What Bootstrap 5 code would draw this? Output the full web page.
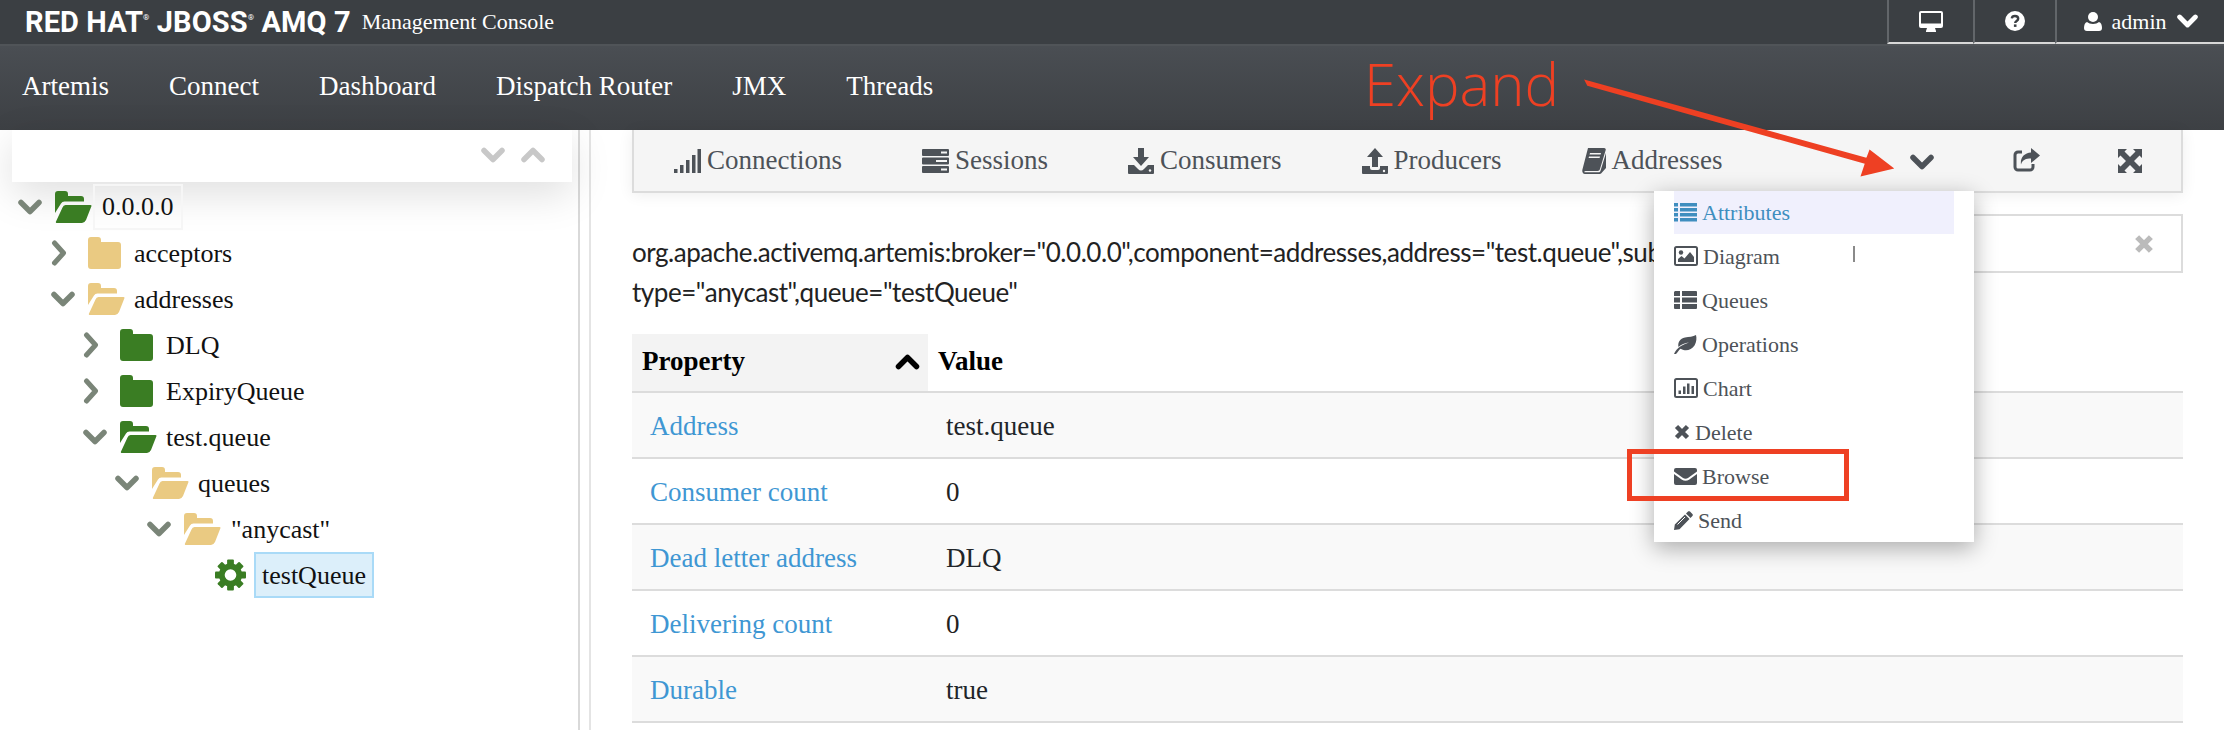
<!DOCTYPE html>
<html lang="en">
<head>
  <meta charset="UTF-8" />
  <meta name="viewport" content="width=device-width, initial-scale=1.0" />
  <title>Red Hat JBoss AMQ 7 Management Console</title>
  <link rel="stylesheet" href="https://cdn.jsdelivr.net/npm/bootstrap@5.3.0/dist/css/bootstrap.min.css">
  <style>
    html, body { height: 730px; overflow: hidden; }
    body { background: #fff; color: #222; font-family: "Liberation Serif", serif; font-size: 27px; }
    svg { display: block; flex: none; }
    .shot-page { position: relative; width: 2228px; height: 730px; padding-right: 4px; overflow: hidden; }

    /* top bars */
    .util-bar { height: 46px; background: #3b3f43; border-bottom: 2px solid #505458; }
    .brand-mark { font-family: "Roboto", "Liberation Sans", sans-serif; font-weight: 700; font-size: 29px; color: #fff; margin-left: 25px; line-height: 44px; white-space: nowrap; letter-spacing: .1px; }
    .brand-mark sup { font-size: 8px; top: -1.5em; font-weight: 400; }
    .brand-sub { font-size: 22px; color: #fff; margin-left: 11px; line-height: 44px; }
    .util-cell { height: 44px; border-left: 2px solid #62666a; border-bottom: 2px solid #d8d8d8; display: flex; align-items: center; justify-content: center; color: #fff; font-size: 22px; }
    .util-display { width: 86px; }
    .util-help { width: 82px; }
    .util-user { width: 169px; gap: 10px; }
    .main-nav { height: 84px; background: linear-gradient(#4a4e53, #3d4044); position: relative; }
    .main-nav .nav-link { color: #fff; font-size: 27px; padding: 0 30px; line-height: 81px; }
    .main-nav .nav-link:first-child { padding-left: 22px; }
    .expand-label { position: absolute; left: 1364px; top: -1px; font-family: "Open Sans", sans-serif; font-weight: 300; font-size: 58px; line-height: 78px; color: #ee4023; }

    /* tree pane */
    .tree-pane { width: 578px; height: 600px; flex: none; position: relative; }
    .tree-search { height: 52px; margin: 0 6px 0 12px; background: #fff; box-shadow: 0 12px 40px rgba(0, 0, 0, .13); padding: 17px 27px 0 0; color: #c8c8c8; position: relative; z-index: 1; }
    .tree-list { list-style: none; margin: 2px 0 0; padding: 0; font-size: 26px; color: #111; position: relative; z-index: 2; }
    .tree-row { height: 46px; display: flex; align-items: center; }
    .tree-toggle { width: 37px; flex: none; color: #7a8578; }
    .tree-folder { width: 39px; flex: none; }
    .tree-text { padding: 2px 7px 0; line-height: 40px; border: 2px solid transparent; }
    .is-root .tree-text { border-color: #f6f6f6; margin-left: -1px; padding-top: 0; line-height: 42px; }
    .is-selected .tree-text { background: #dceffa; border-color: #a9daf7; margin-left: 8px; padding-right: 6px; }
    .lvl-0 { padding-left: 18px; }
    .lvl-1 { padding-left: 51px; }
    .lvl-2 { padding-left: 83px; }
    .lvl-3 { padding-left: 115px; }
    .lvl-4 { padding-left: 147px; }
    .lvl-5 { padding-left: 215px; }
    .lvl-1 .tree-text, .lvl-2 .tree-text, .lvl-3 .tree-text { padding-left: 5px; }
    .lvl-4 .tree-text { padding-left: 6px; }
    .lvl-5 .tree-text { padding-left: 6px; }
    .c-green { color: #3a7d23; }
    .c-tan { color: #eaca82; }
    .pane-gutter { width: 13px; flex: none; height: 600px; border-left: 2px solid #d9d9d9; border-right: 2px solid #e4e4e4; }

    /* main pane */
    .main-pane { flex: 1; padding: 0 41px; min-width: 0; }
    .tool-bar { height: 63px; background: #f5f5f5; border: 2px solid #dcdcdc; border-top: 0; box-shadow: 0 2px 14px rgba(0, 0, 0, .07); padding-left: 40px; color: #4d5258; position: relative; }
    .tool-item { display: flex; align-items: center; gap: 6px; margin-right: 80px; line-height: 61px; color: #4d5258; text-decoration: none; }
    .tool-right { position: absolute; top: 0; left: 0; height: 61px; }
    .tool-right svg { position: absolute; }
    .title-row { margin-top: 21px; height: 120px; }
    .mbean-title { width: 1318px; padding-top: 18px; font-family: "Lato", sans-serif; font-size: 26px; line-height: 40px; color: #222; letter-spacing: -.45px; flex: none; }
    .filter-box { flex: 1; height: 59px; border: 2px solid #dcdcdc; color: #bbb; display: flex; align-items: center; justify-content: flex-end; padding-right: 27px; }
    .attr-table { margin: 0; --bs-table-striped-bg: #f9f9f9; --bs-table-border-color: #dcdcdc; }
    .attr-table th, .attr-table td { border-bottom-width: 2px; font-size: 27px; color: #222; vertical-align: middle; padding: 3px 0 0 18px; height: 66px; line-height: 1; }
    .attr-table th { height: 58px; color: #000; padding: 0 0 2px 10px; background: #fff; }
    .attr-table th.sorted-col { background: #f3f3f3; width: 296px; }
    .attr-table a { color: #3f97d3; text-decoration: none; }

    /* menu hanging off the toolbar */
    .more-menu.dropdown-menu { display: block; left: 1020px; top: 61px; width: 320px; height: 351px; margin: 0; padding: 0 20px; border: 0; border-radius: 0; box-shadow: 0 6px 22px rgba(0, 0, 0, .32); z-index: 5; }
    .more-menu .dropdown-item { display: flex; align-items: center; gap: 5px; height: 44px; padding: 0; font-size: 22px; color: #4d5258; }
    .more-menu .dropdown-item.is-current { background: #f0f0fd; color: #3f8ebf; height: 43px; }
    .stray-caret { position: absolute; left: 199px; top: 55px; width: 2px; height: 16px; background: #8a8a8a; }
    .note-layer { position: absolute; left: 0; top: 0; z-index: 10; pointer-events: none; }
  </style>
</head>
<body>
  <svg width="0" height="0" class="position-absolute">
    <defs>
      <symbol id="i-down" viewBox="0 0 24 16"><path d="M3 3.5 12 12.5 21 3.5" fill="none" stroke="currentColor" stroke-width="5.5" stroke-linejoin="round" stroke-linecap="round"/></symbol>
      <symbol id="i-up" viewBox="0 0 24 16"><path d="M3 12.5 12 3.5 21 12.5" fill="none" stroke="currentColor" stroke-width="5.5" stroke-linejoin="round" stroke-linecap="round"/></symbol>
      <symbol id="i-right" viewBox="0 0 16 26"><path d="M3.5 3 12.5 13 3.5 23" fill="none" stroke="currentColor" stroke-width="5" stroke-linejoin="round" stroke-linecap="round"/></symbol>
      <symbol id="i-folder" viewBox="0 0 33 32"><path d="M3 0h7a3 3 0 0 1 3 3v2h17a3 3 0 0 1 3 3v21a3 3 0 0 1-3 3H3a3 3 0 0 1-3-3V3a3 3 0 0 1 3-3z" fill="currentColor"/></symbol>
      <symbol id="i-folder-open" viewBox="0 0 37 32"><path d="M3 0h7a3 3 0 0 1 3 3v2h13a3 3 0 0 1 3 3v2.500H9.500a4 4 0 0 0-3.500 2L0 22V3a3 3 0 0 1 3-3z" fill="currentColor"/><path d="M10.500 14h25c1 0 1.300 .8 .8 1.600L31 29a5 5 0 0 1-4 3H2c-1 0-1.500-.8-1-1.600L7.500 16.500a4 4 0 0 1 3-2.500z" fill="currentColor"/></symbol>
      <symbol id="i-gear" viewBox="0 0 32 32"><g fill="currentColor"><rect x="12.500" y="0" width="7" height="32" rx="1"/><rect x="12.500" y="0" width="7" height="32" rx="1" transform="rotate(45 16 16)"/><rect x="12.500" y="0" width="7" height="32" rx="1" transform="rotate(90 16 16)"/><rect x="12.500" y="0" width="7" height="32" rx="1" transform="rotate(135 16 16)"/></g><circle cx="16" cy="16" r="9" fill="none" stroke="currentColor" stroke-width="6"/><circle cx="16" cy="16" r="6" fill="#fff"/></symbol>
      <symbol id="i-signal" viewBox="0 0 27 24"><g fill="currentColor"><rect x="0" y="20" width="3.500" height="4"/><rect x="6" y="16" width="3.500" height="8"/><rect x="12" y="11" width="3.500" height="13"/><rect x="18" y="6" width="3.500" height="18"/><rect x="23.500" y="0" width="3.500" height="24"/></g></symbol>
      <symbol id="i-server" viewBox="0 0 27 24"><path d="M1 0h25a1 1 0 0 1 1 1v5a1 1 0 0 1-1 1H1a1 1 0 0 1-1-1V1a1 1 0 0 1 1-1zm0 8.500h25a1 1 0 0 1 1 1v5a1 1 0 0 1-1 1H1a1 1 0 0 1-1-1v-5a1 1 0 0 1 1-1zm0 8.500h25a1 1 0 0 1 1 1v5a1 1 0 0 1-1 1H1a1 1 0 0 1-1-1v-5a1 1 0 0 1 1-1z" fill="currentColor"/><path d="M19 2.500h6v2h-6zM14 11h11v2H14zM19 19.500h6v2h-6z" fill="#f5f5f5"/></symbol>
      <symbol id="i-download" viewBox="0 0 26 26"><path d="M10 0h6v9h5l-8 9-8-9h5z" fill="currentColor"/><path d="M0 17h6l4 4c2 2 4 2 6 0l4-4h6v8a1 1 0 0 1-1 1H1a1 1 0 0 1-1-1z" fill="currentColor"/><circle cx="22" cy="22.500" r="1.200" fill="#f5f5f5"/></symbol>
      <symbol id="i-upload" viewBox="0 0 26 26"><path d="M13 0l8 9h-5v10h-6V9H5z" fill="currentColor"/><path d="M0 18h8v2a2 2 0 0 0 2 2h6a2 2 0 0 0 2-2v-2h8v7a1 1 0 0 1-1 1H1a1 1 0 0 1-1-1z" fill="currentColor"/><circle cx="22" cy="23" r="1.200" fill="#f5f5f5"/></symbol>
      <symbol id="i-book" viewBox="0 0 24 26"><path d="M6 0h16c1.500 0 2 1 1.700 2L18 21c-.4 1.300-1 2-2.500 2H3.500c-1 0-1.500 1-1 1.200h14c1 0 1.700-.5 2-1.500L24 5v15l-4.500 5c-.5.6-1.300 1-2.500 1H3c-2 0-3-2-2.700-4z" fill="currentColor"/><path d="M8 5h11l-.4 1.500H7.500zM7 8.500h11l-.4 1.500h-11z" fill="#f5f5f5"/></symbol>
      <symbol id="i-list" viewBox="0 0 23 19"><path d="M0 0h4v3.500H0zM6 0h17v3.500H6zM0 5h4v3.500H0zM6 5h17v3.500H6zM0 10h4v3.500H0zM6 10h17v3.500H6zM0 15h4v3.500H0zM6 15h17v3.500H6z" fill="currentColor"/></symbol>
      <symbol id="i-thlist" viewBox="0 0 23 18"><path d="M1 0h5v5H0V1zM8 0h14a1 1 0 0 1 1 1v4H8zM0 6.500h6v5H0zM8 6.500h15v5H8zM0 13h6v5H1a1 1 0 0 1-1-1zM8 13h15v4a1 1 0 0 1-1 1H8z" fill="currentColor"/></symbol>
      <symbol id="i-picture" viewBox="0 0 24 20"><rect x="1" y="1" width="22" height="18" rx="1.500" fill="none" stroke="currentColor" stroke-width="2"/><circle cx="7" cy="6.500" r="2.200" fill="currentColor"/><path d="M4 16v-3l3.500-3 3 2.500L16 6l4 5v5z" fill="currentColor"/></symbol>
      <symbol id="i-leaf" viewBox="0 0 23 19"><path d="M22 0c.8 3 .6 7-1.500 10.500-2.500 4-7 5.500-11 4.500-1.500-.4-2.500-.8-3-1.200C5 15 3.500 17.500 2 19H0c1-2.500 3.500-6 7-8 2.500-1.500 5.500-2.500 8-3.500-4 .5-8 1.800-10.500 4.500C3.500 7.500 6 3.500 11 2.500 15 1.700 19 2 22 0z" fill="currentColor"/></symbol>
      <symbol id="i-chart" viewBox="0 0 24 20"><rect x="1" y="1" width="22" height="18" rx="1.500" fill="none" stroke="currentColor" stroke-width="2"/><path d="M4.500 12.500h2.500v3.500H4.500zM9 8.500h2.500V16H9zM13 5.500h2.500V16H13zM17.500 8h2.500v8h-2.500z" fill="currentColor"/></symbol>
      <symbol id="i-times" viewBox="0 0 16 16"><path d="M2.500 2.500 13.500 13.500M13.500 2.500 2.500 13.500" fill="none" stroke="currentColor" stroke-width="4.500"/></symbol>
      <symbol id="i-envelope" viewBox="0 0 23 17"><path d="M2 0h19a2 2 0 0 1 2 2v1.500l-9 6.500c-1.500 1-3.500 1-5 0L0 3.500V2a2 2 0 0 1 2-2z" fill="currentColor"/><path d="M0 6l8 5.800c2 1.400 5 1.400 7 0L23 6v9a2 2 0 0 1-2 2H2a2 2 0 0 1-2-2z" fill="currentColor"/></symbol>
      <symbol id="i-pencil" viewBox="0 0 19 19"><path d="M14 .6c.6-.6 1.300-.6 2 0l2.400 2.400c.6.6.6 1.300 0 2L16.500 7 12 2.500zM11 3.500 15.500 8l-10 10.200L0 19l.8-5.400z" fill="currentColor"/><path d="M3.500 13.500 11 6" fill="none" stroke="#fff" stroke-width="1"/></symbol>
      <symbol id="i-desktop" viewBox="0 0 24 21"><path d="M2 0h20a2 2 0 0 1 2 2v13a2 2 0 0 1-2 2h-6l1 3v1H7v-1l1-3H2a2 2 0 0 1-2-2V2a2 2 0 0 1 2-2zm0 2v10.500h20V2z" fill="currentColor"/></symbol>
      <symbol id="i-help" viewBox="0 0 20 20"><circle cx="10" cy="10" r="10" fill="currentColor"/><path d="M6.800 7.400C7 5.800 8.300 5 10 5c1.800 0 3.200 1 3.200 2.700 0 2.300-3 2.300-3 4.300" fill="none" stroke="#3b3f43" stroke-width="2.400"/><rect x="8.900" y="13.400" width="2.600" height="2.500" fill="#3b3f43"/></symbol>
      <symbol id="i-user" viewBox="0 0 18 19"><circle cx="9" cy="5" r="5" fill="currentColor"/><path d="M3 10c1.500 1.200 3.500 2 6 2s4.500-.8 6-2c2 .6 3 3 3 6 0 2-1 3-3 3H3c-2 0-3-1-3-3 0-3 1-5.400 3-6z" fill="currentColor"/></symbol>
      <symbol id="i-share" viewBox="0 0 27 24"><path d="M9 4H5a3 3 0 0 0-3 3v12a3 3 0 0 0 3 3h12a3 3 0 0 0 3-3v-3" fill="none" stroke="currentColor" stroke-width="3"/><path d="M18 0l9 7.500-9 7.500v-4.500c-5 0-8.500 1-10 6C7 10 11 5 18 4.500z" fill="currentColor"/></symbol>
      <symbol id="i-expand" viewBox="0 0 24 24"><path d="M0 0h9L6.500 2.500 12 8l5.500-5.500L15 0h9v9l-2.500-2.500L16 12l5.500 5.500L24 15v9h-9l2.500-2.500L12 16l-5.500 5.500L9 24H0v-9l2.500 2.500L8 12 2.500 6.500 0 9z" fill="currentColor"/></symbol>
    </defs>
  </svg>

  <div class="shot-page">
    <header class="util-bar d-flex justify-content-between">
      <div class="d-flex">
        <span class="brand-mark">RED HAT<sup>®</sup> JBOSS<sup>®</sup> AMQ 7</span>
        <span class="brand-sub">Management Console</span>
      </div>
      <div class="d-flex">
        <div class="util-cell util-display"><svg width="24" height="21"><use href="#i-desktop"/></svg></div>
        <div class="util-cell util-help"><svg width="20" height="20"><use href="#i-help"/></svg></div>
        <div class="util-cell util-user"><svg width="18" height="19"><use href="#i-user"/></svg><span>admin</span><svg width="21" height="14"><use href="#i-down"/></svg></div>
      </div>
    </header>

    <nav class="main-nav nav">
      <a class="nav-link" href="#">Artemis</a>
      <a class="nav-link" href="#">Connect</a>
      <a class="nav-link" href="#">Dashboard</a>
      <a class="nav-link" href="#">Dispatch Router</a>
      <a class="nav-link" href="#">JMX</a>
      <a class="nav-link" href="#">Threads</a>
      <div class="expand-label">Expand</div>
    </nav>

    <div class="d-flex">
      <aside class="tree-pane">
        <div class="tree-search d-flex justify-content-end gap-3">
          <svg width="24" height="16"><use href="#i-down"/></svg>
          <svg width="24" height="16"><use href="#i-up"/></svg>
        </div>
        <ul class="tree-list">
          <li class="tree-row lvl-0 is-root"><span class="tree-toggle"><svg width="24" height="16"><use href="#i-down"/></svg></span><span class="tree-folder c-green"><svg width="37" height="32"><use href="#i-folder-open"/></svg></span><span class="tree-text">0.0.0.0</span></li>
          <li class="tree-row lvl-1"><span class="tree-toggle"><svg width="16" height="26"><use href="#i-right"/></svg></span><span class="tree-folder c-tan"><svg width="33" height="32"><use href="#i-folder"/></svg></span><span class="tree-text">acceptors</span></li>
          <li class="tree-row lvl-1"><span class="tree-toggle"><svg width="24" height="16"><use href="#i-down"/></svg></span><span class="tree-folder c-tan"><svg width="37" height="32"><use href="#i-folder-open"/></svg></span><span class="tree-text">addresses</span></li>
          <li class="tree-row lvl-2"><span class="tree-toggle"><svg width="16" height="26"><use href="#i-right"/></svg></span><span class="tree-folder c-green"><svg width="33" height="32"><use href="#i-folder"/></svg></span><span class="tree-text">DLQ</span></li>
          <li class="tree-row lvl-2"><span class="tree-toggle"><svg width="16" height="26"><use href="#i-right"/></svg></span><span class="tree-folder c-green"><svg width="33" height="32"><use href="#i-folder"/></svg></span><span class="tree-text">ExpiryQueue</span></li>
          <li class="tree-row lvl-2"><span class="tree-toggle"><svg width="24" height="16"><use href="#i-down"/></svg></span><span class="tree-folder c-green"><svg width="37" height="32"><use href="#i-folder-open"/></svg></span><span class="tree-text">test.queue</span></li>
          <li class="tree-row lvl-3"><span class="tree-toggle"><svg width="24" height="16"><use href="#i-down"/></svg></span><span class="tree-folder c-tan"><svg width="37" height="32"><use href="#i-folder-open"/></svg></span><span class="tree-text">queues</span></li>
          <li class="tree-row lvl-4"><span class="tree-toggle"><svg width="24" height="16"><use href="#i-down"/></svg></span><span class="tree-folder c-tan"><svg width="37" height="32"><use href="#i-folder-open"/></svg></span><span class="tree-text">"anycast"</span></li>
          <li class="tree-row lvl-5 is-selected"><span class="c-green"><svg width="31" height="34"><use href="#i-gear"/></svg></span><span class="tree-text">testQueue</span></li>
        </ul>
      </aside>
      <div class="pane-gutter"></div>

      <main class="main-pane">
        <div class="tool-bar d-flex align-items-center">
          <a class="tool-item"><svg width="27" height="24"><use href="#i-signal"/></svg>Connections</a>
          <a class="tool-item"><svg width="27" height="24"><use href="#i-server"/></svg>Sessions</a>
          <a class="tool-item"><svg width="26" height="26"><use href="#i-download"/></svg>Consumers</a>
          <a class="tool-item"><svg width="26" height="26"><use href="#i-upload"/></svg>Producers</a>
          <a class="tool-item"><svg width="24" height="26"><use href="#i-book"/></svg>Addresses</a>
          <div class="tool-right">
            <svg width="24" height="16" style="left:1276px;top:24px"><use href="#i-down"/></svg>
            <svg width="27" height="24" style="left:1379px;top:18px"><use href="#i-share"/></svg>
            <svg width="24" height="24" style="left:1484px;top:19px"><use href="#i-expand"/></svg>
          </div>

          <div class="more-menu dropdown-menu">
            <a class="dropdown-item is-current"><svg width="23" height="19"><use href="#i-list"/></svg>Attributes</a>
            <a class="dropdown-item"><svg width="24" height="20"><use href="#i-picture"/></svg>Diagram</a>
            <a class="dropdown-item"><svg width="23" height="18"><use href="#i-thlist"/></svg>Queues</a>
            <a class="dropdown-item"><svg width="23" height="19"><use href="#i-leaf"/></svg>Operations</a>
            <a class="dropdown-item"><svg width="24" height="20"><use href="#i-chart"/></svg>Chart</a>
            <a class="dropdown-item"><svg width="16" height="16"><use href="#i-times"/></svg>Delete</a>
            <a class="dropdown-item"><svg width="23" height="17"><use href="#i-envelope"/></svg>Browse</a>
            <a class="dropdown-item"><svg width="19" height="19"><use href="#i-pencil"/></svg>Send</a>
            <span class="stray-caret"></span>
          </div>
        </div>

        <div class="title-row d-flex align-items-start">
          <div class="mbean-title">org.apache.activemq.artemis:broker="0.0.0.0",component=addresses,address="test.queue",subcomponent=queues,routing-type="anycast",queue="testQueue"</div>
          <div class="filter-box"><svg width="20" height="20"><use href="#i-times"/></svg></div>
        </div>

        <table class="table table-striped attr-table">
          <thead>
            <tr>
              <th class="sorted-col"><div class="d-flex justify-content-between align-items-center pe-2">Property<svg width="25" height="16" class="text-black"><use href="#i-up"/></svg></div></th>
              <th>Value</th>
            </tr>
          </thead>
          <tbody>
            <tr><td><a href="#">Address</a></td><td>test.queue</td></tr>
            <tr><td><a href="#">Consumer count</a></td><td>0</td></tr>
            <tr><td><a href="#">Dead letter address</a></td><td>DLQ</td></tr>
            <tr><td><a href="#">Delivering count</a></td><td>0</td></tr>
            <tr><td><a href="#">Durable</a></td><td>true</td></tr>
          </tbody>
        </table>
      </main>
    </div>

    <!-- the red call-outs drawn on top of the screenshot -->
    <svg class="note-layer" width="2228" height="730">
      <path d="M1586 81 1588 85 1866 163 1862 175 1892 168 1870 151 1867 159z" fill="#ee4023" stroke="#ee4023" stroke-width="2"/>
      <rect x="1629.500" y="451.500" width="217" height="47" fill="none" stroke="#ee4023" stroke-width="5"/>
    </svg>
  </div>

  <script src="https://cdn.jsdelivr.net/npm/bootstrap@5.3.0/dist/js/bootstrap.bundle.min.js"></script>
</body>
</html>
